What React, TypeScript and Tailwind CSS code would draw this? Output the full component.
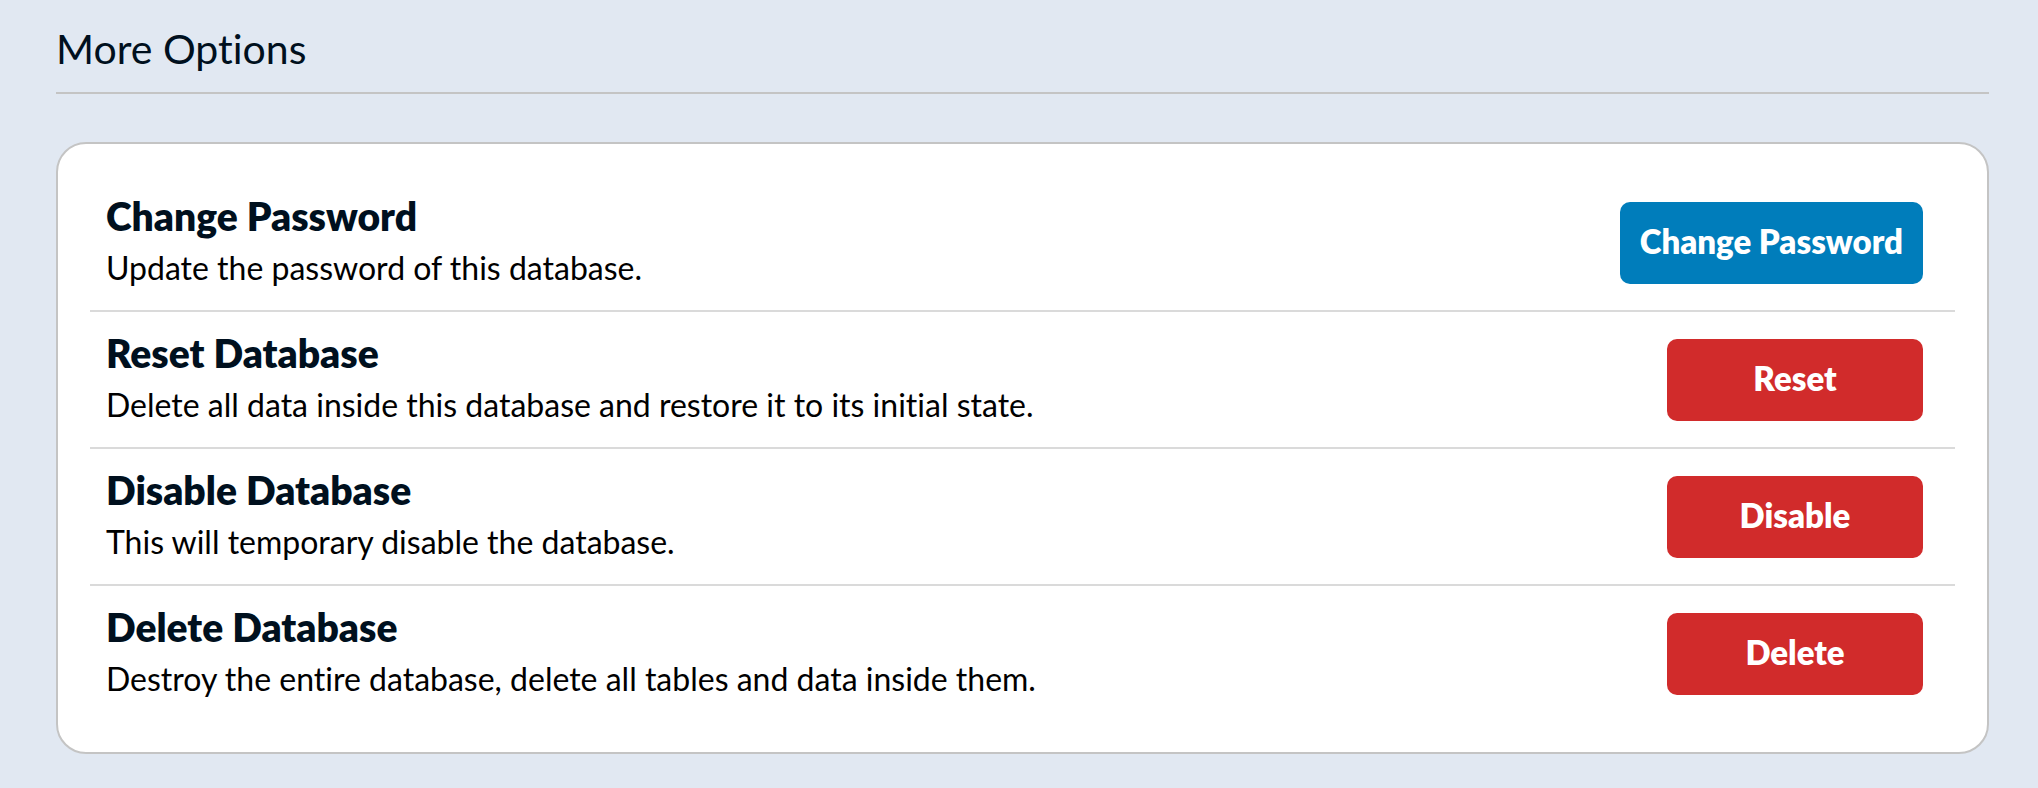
type Option = {
  title: string;
  description: string;
  action: string;
  tone: "primary" | "danger";
};

const options: Option[] = [
  {
    title: "Change Password",
    description: "Update the password of this database.",
    action: "Change Password",
    tone: "primary",
  },
  {
    title: "Reset Database",
    description: "Delete all data inside this database and restore it to its initial state.",
    action: "Reset",
    tone: "danger",
  },
  {
    title: "Disable Database",
    description: "This will temporary disable the database.",
    action: "Disable",
    tone: "danger",
  },
  {
    title: "Delete Database",
    description: "Destroy the entire database, delete all tables and data inside them.",
    action: "Delete",
    tone: "danger",
  },
];

const tones = {
  primary: "bg-[#007dbb]",
  danger: "bg-[#d12b2b]",
};

function OptionRow({ title, description, action, tone }: Option) {
  return (
    <li className="flex items-center justify-between gap-8 pt-[18px] pr-8 pb-[17px] pl-4">
      <div>
        <h2 className="text-[39px] leading-[46px] font-extrabold text-[#00101e]">{title}</h2>
        <p className="mt-1 text-[32px] leading-[50px] text-black">{description}</p>
      </div>
      <button
        type="button"
        className={`h-[82px] min-w-[256px] shrink-0 rounded-[10px] px-5 pb-1 text-[33px] leading-[40px] font-extrabold text-white ${tones[tone]}`}
      >
        {action}
      </button>
    </li>
  );
}

export default function App() {
  return (
    <main className="min-h-screen bg-[#e1e8f2] pt-6 pr-[49px] pb-8 pl-14 font-['Lato',sans-serif] [font-variant-ligatures:none]">
      <h1 className="border-b-2 border-[#c4c4c4] pb-[18px] text-[41px] leading-[50px] text-[#00101e]">
        More Options
      </h1>
      <section className="mt-12 rounded-[30px] border-2 border-[#c4c4c4] bg-white px-8 py-[31px]">
        <ul className="divide-y-2 divide-[#dadada]">
          {options.map((option) => (
            <OptionRow key={option.title} {...option} />
          ))}
        </ul>
      </section>
    </main>
  );
}
